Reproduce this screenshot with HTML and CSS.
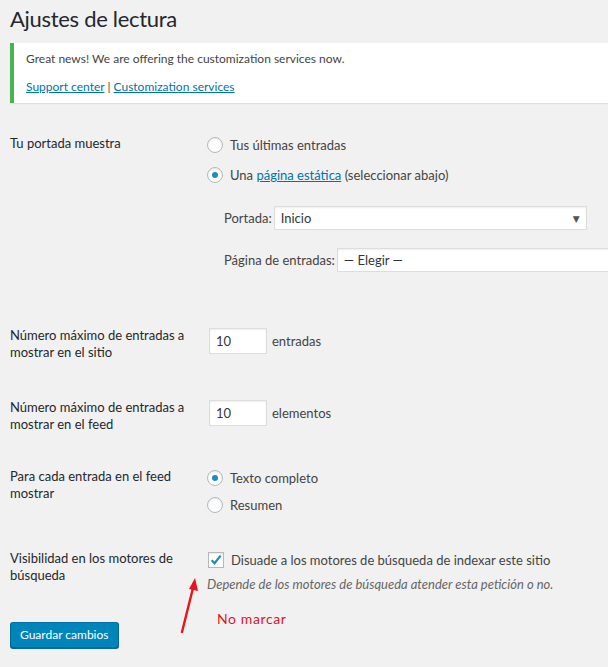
FILE: index.html
```html
<!DOCTYPE html>
<html lang="es">
<head>
<meta charset="utf-8">
<title>Ajustes de lectura</title>
<link rel="stylesheet" href="styles.css">
</head>
<body>
<div class="wrap">
  <h1 class="title">Ajustes de lectura</h1>
  <div class="notice">
    <p>Great news! We are offering the customization services now.</p>
    <p><a href="#">Support center</a> | <a href="#">Customization services</a></p>
  </div>

  <div class="form">
    <div class="row row-front">
      <div class="th">Tu portada muestra</div>
      <div class="td">
        <div class="choice"><span class="radio"></span>Tus últimas entradas</div>
        <div class="choice choice-gap"><span class="radio checked"></span>Una&nbsp;<a href="#">página estática</a>&nbsp;(seleccionar abajo)</div>
        <div class="pages">
          <div class="sel-line">
            <span class="sel-label">Portada:</span>
            <span class="select select-front">Inicio<span class="caret">▼</span></span>
          </div>
          <div class="sel-line sel-line-2">
            <span class="sel-label">Página de entradas:</span>
            <span class="select select-posts">— Elegir —</span>
          </div>
        </div>
      </div>
    </div>

    <div class="row row-num row-num-1">
      <div class="th">Número máximo de entradas a mostrar en el sitio</div>
      <div class="td">
        <div class="num-line"><span class="num">10</span><span>entradas</span></div>
      </div>
    </div>

    <div class="row row-num row-num-2">
      <div class="th">Número máximo de entradas a mostrar en el feed</div>
      <div class="td">
        <div class="num-line"><span class="num">10</span><span>elementos</span></div>
      </div>
    </div>

    <div class="row row-feed">
      <div class="th">Para cada entrada en el feed mostrar</div>
      <div class="td">
        <div class="choice"><span class="radio checked"></span>Texto completo</div>
        <div class="choice choice-gap-sm"><span class="radio"></span>Resumen</div>
      </div>
    </div>

    <div class="row row-vis">
      <div class="th">Visibilidad en los motores de búsqueda</div>
      <div class="td">
        <div class="choice"><span class="checkbox"><svg viewBox="0 0 16 16" width="16" height="16"><path d="M3.6 8.2 L6.6 11.3 L12.6 3.6" fill="none" stroke="#1e8cbe" stroke-width="2.2"/></svg></span>Disuade a los motores de búsqueda de indexar este sitio</div>
        <p class="description">Depende de los motores de búsqueda atender esta petición o no.</p>
      </div>
    </div>
  </div>

  <div class="submit">
    <button class="button-primary" type="button">Guardar cambios</button>
  </div>

  <span class="annotation-text">No marcar</span>
  <svg class="annotation-arrow" width="30" height="60" viewBox="0 0 30 60">
    <line x1="5" y1="58" x2="16" y2="14" stroke="#e8141c" stroke-width="2.4" stroke-linecap="round"/>
    <polygon points="18,4 21,17 12,15" fill="#e8141c"/>
  </svg>
</div>
</body>
</html>
```

FILE: styles.css
```css
* { box-sizing: border-box; }

html, body {
  margin: 0;
  padding: 0;
  background: #f1f1f1;
}

body {
  font-family: Lato, "Open Sans", "DejaVu Sans", sans-serif;
  font-size: 13px;
  color: #444;
  overflow: hidden;
}

a { color: #0073aa; text-decoration: underline; }

.wrap {
  position: relative;
  padding: 0 0 0 10px;
  height: 667px;
}

.title {
  margin: 0;
  padding: 4px 0 0 0;
  font-size: 22px;
  letter-spacing: -0.3px;
  font-weight: 400;
  line-height: 29px;
  color: #23282d;
}

.notice {
  margin-top: 10px;
  background: #fff;
  border-left: 4px solid #46b450;
  box-shadow: 0 1px 1px rgba(0,0,0,.08);
  padding: 7px 12px;
  height: 60px;
}

.notice p {
  margin: 0;
  font-size: 12px;
  line-height: 18px;
  color: #444;
}

.notice p + p { margin-top: 10px; }

.form { margin-top: 32px; }

.row {
  display: grid;
  grid-template-columns: 197px 1fr;
}

.th {
  color: #23282d;
  line-height: 17px;
  padding-right: 8px;
}

.row-num-1 { margin-top: 55px; }
.row-num-2 { margin-top: 38px; }
.row-feed { margin-top: 35px; }
.row-vis { margin-top: 35px; }

.choice {
  display: flex;
  align-items: center;
  height: 20px;
  line-height: 20px;
  color: #444;
  white-space: nowrap;
}

.choice-gap { margin-top: 10px; }
.choice-gap-sm { margin-top: 7px; }

.radio {
  flex: none;
  width: 16px;
  height: 16px;
  border: 1px solid #b4b9be;
  border-radius: 50%;
  background: #fff;
  box-shadow: inset 0 1px 2px rgba(0,0,0,.1);
  margin-right: 7px;
  display: flex;
  align-items: center;
  justify-content: center;
}

.radio.checked::after {
  content: "";
  width: 6px;
  height: 6px;
  border-radius: 50%;
  background: #1e8cbe;
}

.checkbox {
  flex: none;
  width: 16px;
  height: 16px;
  border: 1px solid #b4b9be;
  background: #fff;
  box-shadow: inset 0 1px 2px rgba(0,0,0,.1);
  margin-right: 7px;
  margin-left: 1px;
  position: relative;
}

.checkbox svg {
  position: absolute;
  left: -1px;
  top: -1px;
}

.pages {
  margin-top: 21px;
  padding-left: 17px;
}

.sel-line {
  display: flex;
  align-items: center;
  height: 24px;
  color: #444;
  white-space: nowrap;
}

.sel-line-2 { margin-top: 18px; }

.sel-label { margin-right: 2px; }

.select {
  display: flex;
  align-items: center;
  height: 24px;
  background: #fff;
  border: 1px solid #ddd;
  box-shadow: inset 0 1px 2px rgba(0,0,0,.07);
  padding: 0 6px;
  color: #32373c;
}

.select-front {
  width: 313px;
  justify-content: space-between;
}

.select-posts {
  flex: 1;
  min-width: 300px;
}

.caret {
  font-size: 9px;
  color: #555;
}

.num-line {
  display: flex;
  align-items: center;
  color: #444;
  margin-top: 1px;
}

.num {
  width: 58px;
  height: 26px;
  line-height: 24px;
  background: #fff;
  border: 1px solid #ddd;
  box-shadow: inset 0 1px 2px rgba(0,0,0,.07);
  padding: 0 6px;
  margin-left: 2px;
  margin-right: 5px;
  color: #32373c;
}

.description {
  margin: 5px 0 0 0;
  font-style: italic;
  color: #666;
  line-height: 18px;
  white-space: nowrap;
}

.submit {
  margin-top: 29px;
}

.button-primary {
  font-family: inherit;
  font-size: 12px;
  height: 26px;
  line-height: 24px;
  padding: 0 9px;
  background: #0085ba;
  border: 1px solid #0073aa;
  border-color: #0073aa #006799 #006799;
  border-radius: 3px;
  box-shadow: 0 1px 0 #006799;
  color: #fff;
  cursor: pointer;
}

.annotation-text {
  position: absolute;
  left: 217px;
  top: 610px;
  font-size: 14px;
  color: #e0141e;
  letter-spacing: .6px;
}

.annotation-arrow {
  position: absolute;
  left: 177px;
  top: 574px;
}
```
